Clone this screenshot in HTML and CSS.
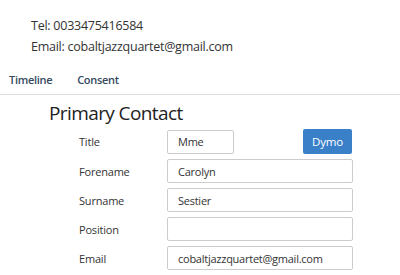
FILE: index.html
```html
<!DOCTYPE html>
<html lang="en">
<head>
  <meta charset="UTF-8" />
  <title>Contact</title>
  <link rel="stylesheet" href="styles.css">
</head>
<body>

  <div class="contacto">
    <p>Tel: 0033475416584</p>
    <p>Email: cobaltjazzquartet@gmail.com</p>
  </div>

  <nav class="pestanas">
    <a href="#">Timeline</a>
    <a href="#">Consent</a>
  </nav>

  <h2>Primary Contact</h2>

  <form class="formulario">
    <div class="fila">
      <label>Title</label>
      <input type="text" class="corto" value="Mme">
      <button type="button" class="dymo">Dymo</button>
    </div>
    <div class="fila">
      <label>Forename</label>
      <input type="text" value="Carolyn">
    </div>
    <div class="fila">
      <label>Surname</label>
      <input type="text" value="Sestier">
    </div>
    <div class="fila">
      <label>Position</label>
      <input type="text" value="">
    </div>
    <div class="fila">
      <label>Email</label>
      <input type="text" value="cobaltjazzquartet@gmail.com">
    </div>
  </form>

</body>
</html>
```

FILE: styles.css
```css
body {
  margin: 0;
  font-family: 'Open Sans', sans-serif;
  color: #333;
  background: #fff;
}

.contacto {
  padding: 15px 0 0 31px;
}

.contacto p {
  margin: 0;
  font-size: 12.5px;
  letter-spacing: -0.25px;
  line-height: 21px;
}

.pestanas {
  display: flex;
  gap: 25px;
  padding: 15px 0 0 9px;
  height: 22px;
  border-bottom: 1px solid #ddd;
}

.pestanas a {
  font-size: 11px;
  font-weight: 600;
  letter-spacing: -0.3px;
  color: #34495e;
  text-decoration: none;
}

h2 {
  margin: 4px 0 2px 49px;
  font-size: 19px;
  font-weight: 400;
  letter-spacing: -0.6px;
  color: #222;
  line-height: 28px;
}

.formulario {
  display: flex;
  flex-direction: column;
  gap: 5px;
}

.fila {
  display: flex;
  align-items: center;
}

label {
  width: 88px;
  padding-left: 79px;
  font-size: 11px;
  letter-spacing: -0.2px;
  color: #333;
}

input {
  width: 186px;
  height: 24px;
  padding: 0 10px;
  border: 1px solid #ccc;
  border-radius: 2px;
  box-sizing: border-box;
  font-family: 'Open Sans', sans-serif;
  font-size: 11px;
  letter-spacing: -0.25px;
  color: #333;
}

input.corto {
  width: 67px;
}

.dymo {
  margin-left: 69px;
  width: 49px;
  height: 25px;
  border: none;
  border-radius: 2px;
  background-color: #3a80c9;
  color: white;
  font-family: 'Open Sans', sans-serif;
  font-size: 11.5px;
  letter-spacing: -0.2px;
  cursor: pointer;
}
```
